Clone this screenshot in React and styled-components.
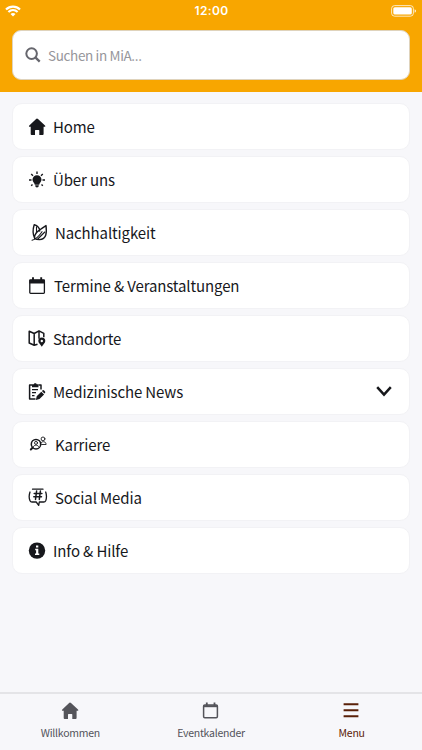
import React, { useState } from 'react';
import styled, { createGlobalStyle } from 'styled-components';

const GlobalStyle = createGlobalStyle`
  * {
    box-sizing: border-box;
  }

  body {
    margin: 0;
    background: #f7f7fa;
    font-family: 'Noto Sans CJK SC', 'Noto Sans', sans-serif;
    color: #17181c;
  }

  button,
  input {
    font: inherit;
    color: inherit;
    border: 0;
    padding: 0;
    margin: 0;
    background: none;
  }
`;

const HomeIcon = () => (
  <svg viewBox="0 0 20 20" fill="currentColor">
    <path d="M9 1.6c.4 0 .7.2 1 .5l7 6.3c.5.5.4 1.400-.4 1.400h-1V17c0 .6-.3.9-.9.9h-3.400v-4.300c0-.4-.2-.6-.6-.6H7.600c-.4 0-.6.2-.6.6v4.300H3.600c-.6 0-.9-.3-.9-.9V9.800h-1c-.8 0-1-.9-.4-1.400l6.800-6.300c.2-.3.500-.5.900-.5z" />
  </svg>
);

const BulbIcon = () => (
  <svg viewBox="0 0 20 20" fill="none" stroke="currentColor" strokeWidth="1.4">
    <path
      d="M9 5.300a4.500 4.500 0 0 0-4.500 4.500c0 2.100 1.800 2.900 2.300 4.900h4.400c.5-2 2.300-2.800 2.300-4.900A4.500 4.500 0 0 0 9 5.300zM7.200 15.300h3.600c0 1.300-.8 2.300-1.800 2.300s-1.800-1-1.800-2.300z"
      fill="currentColor"
      stroke="none"
    />
    <path d="M9 1.500v2.400M1 10h2.500M14.500 10H17M3.200 4l1.800 1.700M14.800 4L13 5.700M3.200 15.700l1.300-1.200M14.800 15.700l-1.300-1.200" />
  </svg>
);

const LeafIcon = () => (
  <svg viewBox="0 0 20 20" fill="none" stroke="currentColor" strokeWidth="1.400" strokeLinecap="round" strokeLinejoin="round">
    <path d="M6.700 15.500C4.800 11.500 4.800 6 6.200 1.700c3.200 1 5.400 3.100 5.500 6.300M6.700 15.500C5.700 10 10 8.200 18 2.600c.8 6.400.8 14-6.500 14-2 0-3.500-.1-4.800-1.100z" />
    <path d="M4 17.200c3.500-.7 7-4 10-8.500M8.500 3.800v6M9.800 16l7-7" strokeWidth="1.100" />
  </svg>
);

const CalendarIcon = () => (
  <svg viewBox="0 0 20 20" fill="none" stroke="currentColor">
    <rect x="1.800" y="4" width="14.600" height="13.300" rx=".8" strokeWidth="1.300" />
    <path d="M1.300 3.800v3.700h15.600V3.800z" fill="currentColor" stroke="none" />
    <path d="M5 1.300v3.500M13.200 1.300v3.500" strokeWidth="1.900" />
  </svg>
);

const TabCalendarIcon = () => (
  <svg viewBox="0 0 20 20" fill="none" stroke="currentColor">
    <rect x="1.600" y="4" width="13.800" height="12.800" rx="1.200" strokeWidth="1.500" />
    <path d="M1.300 4.200v2h14.400v-2z" fill="currentColor" stroke="none" />
    <path d="M4.800 1.500v3.500M12.500 1.500v3.500" strokeWidth="1.800" />
  </svg>
);

const MapIcon = () => (
  <svg viewBox="0 0 20 20" fill="none" stroke="currentColor" strokeWidth="1.500" strokeLinejoin="round">
    <path d="M9.500 15.200L6.200 16.300 1.200 14V2.200l5 2.300L11 1.800l4.800 2.500v4M6.200 4.500v11.800M11 1.800v8" />
    <path
      d="M13.800 8.500a3.500 3.500 0 0 0-3.500 3.500c0 2.100 2.300 3.400 3.500 5.700 1.200-2.300 3.500-3.600 3.500-5.700a3.500 3.500 0 0 0-3.500-3.500zm0 2.300a1.200 1.200 0 1 1 0 2.400 1.200 1.200 0 0 1 0-2.400z"
      fill="currentColor"
      stroke="none"
    />
  </svg>
);

const ClipboardIcon = () => (
  <svg viewBox="0 0 20 20" fill="none" stroke="currentColor" strokeWidth="1.500" strokeLinejoin="round">
    <path d="M4 3H1.600v14H7.500M10.500 3H13v4.500" />
    <path d="M4 2.300h1.700C5.900.8 8.600.8 8.800 2.300h1.700v3H4z" fill="currentColor" stroke="none" />
    <path d="M4 7.600h6M4 10.600h4M4 13.600h2.500" strokeWidth="1.100" />
    <path d="M8.700 14.200l4.600-4.500 2.800 2.800-4.600 4.500-3.600.9zM13.900 9l.9-.8c.6-.5 3 1.600 2.400 2.500l-.8.900z" fill="currentColor" stroke="none" />
  </svg>
);

const CareerIcon = () => (
  <svg viewBox="0 0 20 20" fill="none" stroke="currentColor" strokeLinecap="round">
    <circle cx="8" cy="9.200" r="4.700" strokeWidth="1.500" />
    <path d="M4.800 12.500l-2 2" strokeWidth="1.900" />
    <circle cx="8" cy="7.900" r="1.500" strokeWidth=".9" />
    <path d="M5.400 11.800c.4-2.400 4.800-2.400 5.200 0" strokeWidth=".9" />
    <circle cx="15" cy="3.900" r="1.900" strokeWidth=".9" />
    <path d="M12.500 9.500c-.1-3.900 5.800-3.700 5.600 0h-4.500" strokeWidth=".9" />
  </svg>
);

const HashtagIcon = () => (
  <svg viewBox="0 0 20 20" fill="none" stroke="currentColor" strokeLinecap="round" strokeLinejoin="round">
    <path d="M4.500 1.200h10.500M2 4c-1 2.800-1 6.400 0 8.700.4.900 1 1.300 2 1.300h4.200l2.500 3.400.6-3.400h4.400c1 0 1.600-.4 2-1.300.9-2.400.9-6 0-8.700" strokeWidth="1.300" />
    <path d="M8.600 3L7.500 11.400M12.400 3l-1.100 8.400M6.200 5.600h7.700M5.800 8.800h7.700" strokeWidth="1.500" />
  </svg>
);

const InfoIcon = () => (
  <svg viewBox="0 0 20 20">
    <circle cx="9" cy="9.600" r="8.200" fill="currentColor" />
    <path d="M8 4.600h2.300v2H8zM7.200 7.700h3.100v4.700h1v1.500h-4.300v-1.500h1.100V9.200h-.9z" fill="#fff" />
  </svg>
);

const MenuIcon = () => (
  <svg viewBox="0 0 20 20" fill="currentColor">
    <path d="M.6 2.200h14.800v2H.6zM.6 8.200h14.800v2H.6zM.6 14.200h14.800v2H.6z" />
  </svg>
);

const SearchIcon = () => (
  <svg width="16" height="16" viewBox="0 0 16 16" fill="none" stroke="#66666d" strokeWidth="2">
    <circle cx="6.600" cy="6.600" r="5.300" />
    <path d="M10.600 10.600l4.100 4" strokeWidth="2.300" />
  </svg>
);

const WifiIcon = () => (
  <svg width="16" height="12" viewBox="0 0 16 12" fill="none" stroke="#fff" strokeWidth="2.200">
    <path d="M1 4.500c4-3.900 10-3.900 14 0M3.400 7c2.700-2.500 6.500-2.500 9.200 0" />
    <path d="M8 11.500l2.500-2.600c-1.500-1.300-3.500-1.300-5 0z" fill="#fff" stroke="none" />
  </svg>
);

const BatteryIcon = () => (
  <svg width="26" height="12" viewBox="0 0 26 12" fill="#fff">
    <rect x=".6" y=".6" width="21.800" height="10.600" rx="3" fill="none" stroke="#fff" strokeOpacity=".75" />
    <rect x="2.300" y="2.200" width="18.500" height="7.400" rx="1.500" />
    <path d="M23.700 4.200c1.600.5 1.600 3 0 3.500z" />
  </svg>
);

const menuItems = [
  { label: 'Home', icon: HomeIcon, gap: 5 },
  { label: 'Über uns', icon: BulbIcon, gap: 5 },
  { label: 'Nachhaltigkeit', icon: LeafIcon, gap: 7 },
  { label: 'Termine & Veranstaltungen', icon: CalendarIcon, gap: 6 },
  { label: 'Standorte', icon: MapIcon, gap: 5 },
  { label: 'Medizinische News', icon: ClipboardIcon, gap: 5, expandable: true },
  { label: 'Karriere', icon: CareerIcon, gap: 7 },
  { label: 'Social Media', icon: HashtagIcon, gap: 7 },
  { label: 'Info & Hilfe', icon: InfoIcon, gap: 5 },
];

const tabs = [
  { label: 'Willkommen', icon: HomeIcon },
  { label: 'Eventkalender', icon: TabCalendarIcon },
  { label: 'Menu', icon: MenuIcon },
];

const App = () => {
  const [search, setSearch] = useState('');
  const [activeTab, setActiveTab] = useState('Menu');

  return (
    <Screen>
      <GlobalStyle />
      <Header>
        <StatusBar>
          <WifiIcon />
          <Clock>12:00</Clock>
          <BatteryIcon />
        </StatusBar>
        <SearchBox>
          <SearchIcon />
          <SearchInput placeholder="Suchen in MiA..." value={search} onChange={e => setSearch(e.target.value)} />
        </SearchBox>
      </Header>
      <MenuList>
        {menuItems.map(({ label, icon: Icon, gap, expandable }) => (
          <MenuItem key={label} $gap={gap}>
            <IconSlot>
              <Icon />
            </IconSlot>
            <MenuLabel>{label}</MenuLabel>
            {expandable && (
              <svg width="16" height="11" viewBox="0 0 16 11" fill="none" stroke="currentColor" strokeWidth="2.500">
                <path d="M1.200 1.200L8 8.600l6.800-7.400" />
              </svg>
            )}
          </MenuItem>
        ))}
      </MenuList>
      <TabBar>
        {tabs.map(({ label, icon: Icon }) => (
          <Tab key={label} $active={label === activeTab} onClick={() => setActiveTab(label)}>
            <TabIcon>
              <Icon />
            </TabIcon>
            <TabLabel>{label}</TabLabel>
          </Tab>
        ))}
      </TabBar>
    </Screen>
  );
};

export default App;

const Screen = styled.div`
  display: flex;
  flex-direction: column;
  height: 100vh;
  overflow: hidden;
`;

const Header = styled.header`
  flex: none;
  height: 92px;
  padding: 0 12px;
  background: #f8a600;
`;

const StatusBar = styled.div`
  display: flex;
  justify-content: space-between;
  align-items: center;
  height: 21px;
  margin: 0 -7px 9px -7px;

  svg {
    display: block;
  }
`;

const Clock = styled.span`
  font-family: Inter, sans-serif;
  font-size: 12px;
  font-weight: 600;
  line-height: 21px;
  letter-spacing: 0.35px;
  color: #fff;
  padding-left: 11px;
`;

const SearchBox = styled.div`
  display: flex;
  align-items: center;
  gap: 7px;
  height: 50px;
  padding: 0 12px;
  background: #fff;
  border: 1px solid #dfd3bc;
  border-radius: 9px;
`;

const SearchInput = styled.input`
  flex: 1;
  height: 24px;
  font-size: 13.5px;
  letter-spacing: -0.35px;
  outline: none;

  &::placeholder {
    color: #96969b;
    opacity: 1;
  }
`;

const MenuList = styled.nav`
  flex: 1;
  display: flex;
  flex-direction: column;
  gap: 6px;
  padding: 11px 12px 0;
`;

const MenuItem = styled.button`
  display: flex;
  align-items: center;
  gap: ${props => props.$gap}px;
  height: 47px;
  padding: 0 17px 0 15px;
  background: #fff;
  border: 1px solid #f2f2f5;
  border-radius: 10px;
  text-align: left;
`;

const IconSlot = styled.span`
  flex: none;
  width: 20px;
  height: 20px;

  svg {
    display: block;
  }
`;

const MenuLabel = styled.span`
  flex: 1;
  font-size: 15px;
  line-height: 24px;
  letter-spacing: -0.12px;
  padding-top: 1px;
`;

const TabBar = styled.footer`
  flex: none;
  display: grid;
  grid-template-columns: repeat(3, 1fr);
  height: 58px;
  border-top: 2px solid #e4e4e7;
`;

const Tab = styled.button`
  display: flex;
  flex-direction: column;
  align-items: center;
  padding-top: 7px;
  color: ${props => (props.$active ? '#5a2108' : '#54545a')};
`;

const TabIcon = styled.span`
  width: 18px;
  height: 20px;

  svg {
    display: block;
    width: 20px;
    height: 20px;
  }
`;

const TabLabel = styled.span`
  font-size: 10.5px;
  line-height: 16px;
  letter-spacing: -0.25px;
  margin-top: 4px;
`;
